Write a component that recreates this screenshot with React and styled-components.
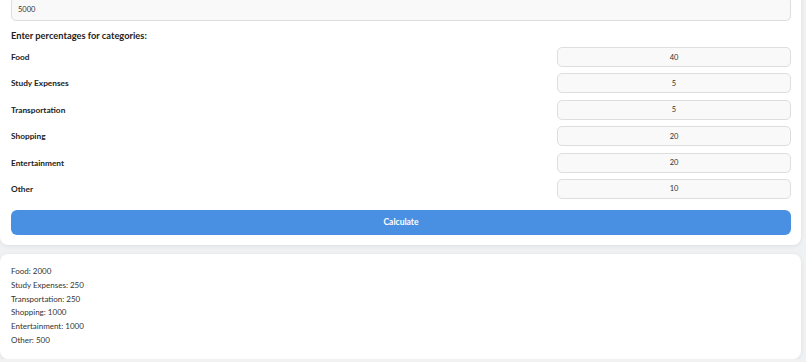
import React from 'react';
import styled, { createGlobalStyle } from 'styled-components';

const GlobalStyle = createGlobalStyle`
  html, body {
    margin: 0;
    padding: 0;
    background: #f0f1f3;
    overflow: hidden;
    font-family: Lato, "Open Sans", sans-serif;
  }
`;

const categories = [
  { name: 'Food', value: 40 },
  { name: 'Study Expenses', value: 5 },
  { name: 'Transportation', value: 5 },
  { name: 'Shopping', value: 20 },
  { name: 'Entertainment', value: 20 },
  { name: 'Other', value: 10 },
];

const total = 5000;

const App = () => {
  return (
    <Page>
      <GlobalStyle />
      <Card className="form">
        <AmountInput defaultValue={total} />
        <Heading>Enter percentages for categories:</Heading>
        <Rows>
          {categories.map((c) => (
            <Row key={c.name}>
              <Label>{c.name}</Label>
              <PercentInput defaultValue={c.value} />
            </Row>
          ))}
        </Rows>
        <Button>Calculate</Button>
      </Card>

      <Card className="results">
        {categories.map((c) => (
          <Result key={c.name}>
            {c.name}: {(total * c.value) / 100}
          </Result>
        ))}
      </Card>
    </Page>
  );
};

export default App;

const Page = styled.div`
  display: flex;
  flex-direction: column;
  gap: 9px;
  width: 801px;
  margin-top: -13px;
`;

const Card = styled.div`
  background: #ffffff;
  border-radius: 8px;
  box-shadow: 0 1px 4px rgba(0, 0, 0, 0.08);
  padding: 10px 10px 10px 11px;
  display: flex;
  flex-direction: column;

  &.results {
    padding: 11px 10px 11px 11px;
  }
`;

const AmountInput = styled.input`
  box-sizing: border-box;
  height: 24px;
  width: 100%;
  border: 1px solid #dedede;
  border-radius: 5px;
  background: #f9f9f9;
  padding: 0 6px;
  font-family: inherit;
  font-size: 7.5px;
  color: #333;
  outline: none;
`;

const Heading = styled.h3`
  margin: 9px 0 0 0;
  font-size: 9.3px;
  line-height: 12px;
  font-weight: 700;
  color: #222;
`;

const Rows = styled.div`
  display: flex;
  flex-direction: column;
  gap: 6.4px;
  margin-top: 5px;
`;

const Row = styled.div`
  display: flex;
  justify-content: space-between;
  align-items: center;
  height: 20px;
`;

const Label = styled.label`
  font-size: 8.3px;
  font-weight: 700;
  color: #222;
`;

const PercentInput = styled.input`
  box-sizing: border-box;
  width: 234px;
  height: 20px;
  border: 1px solid #dedede;
  border-radius: 5px;
  background: #f9f9f9;
  text-align: center;
  font-family: inherit;
  font-size: 7.5px;
  color: #333;
  outline: none;
`;

const Button = styled.button`
  margin-top: 11px;
  height: 25px;
  width: 100%;
  border: none;
  border-radius: 6px;
  background: #4a90e2;
  color: #ffffff;
  font-family: inherit;
  font-size: 8.5px;
  font-weight: 700;
  cursor: pointer;
`;

const Result = styled.p`
  margin: 0;
  font-size: 8px;
  line-height: 13.8px;
  color: #333;
`;
